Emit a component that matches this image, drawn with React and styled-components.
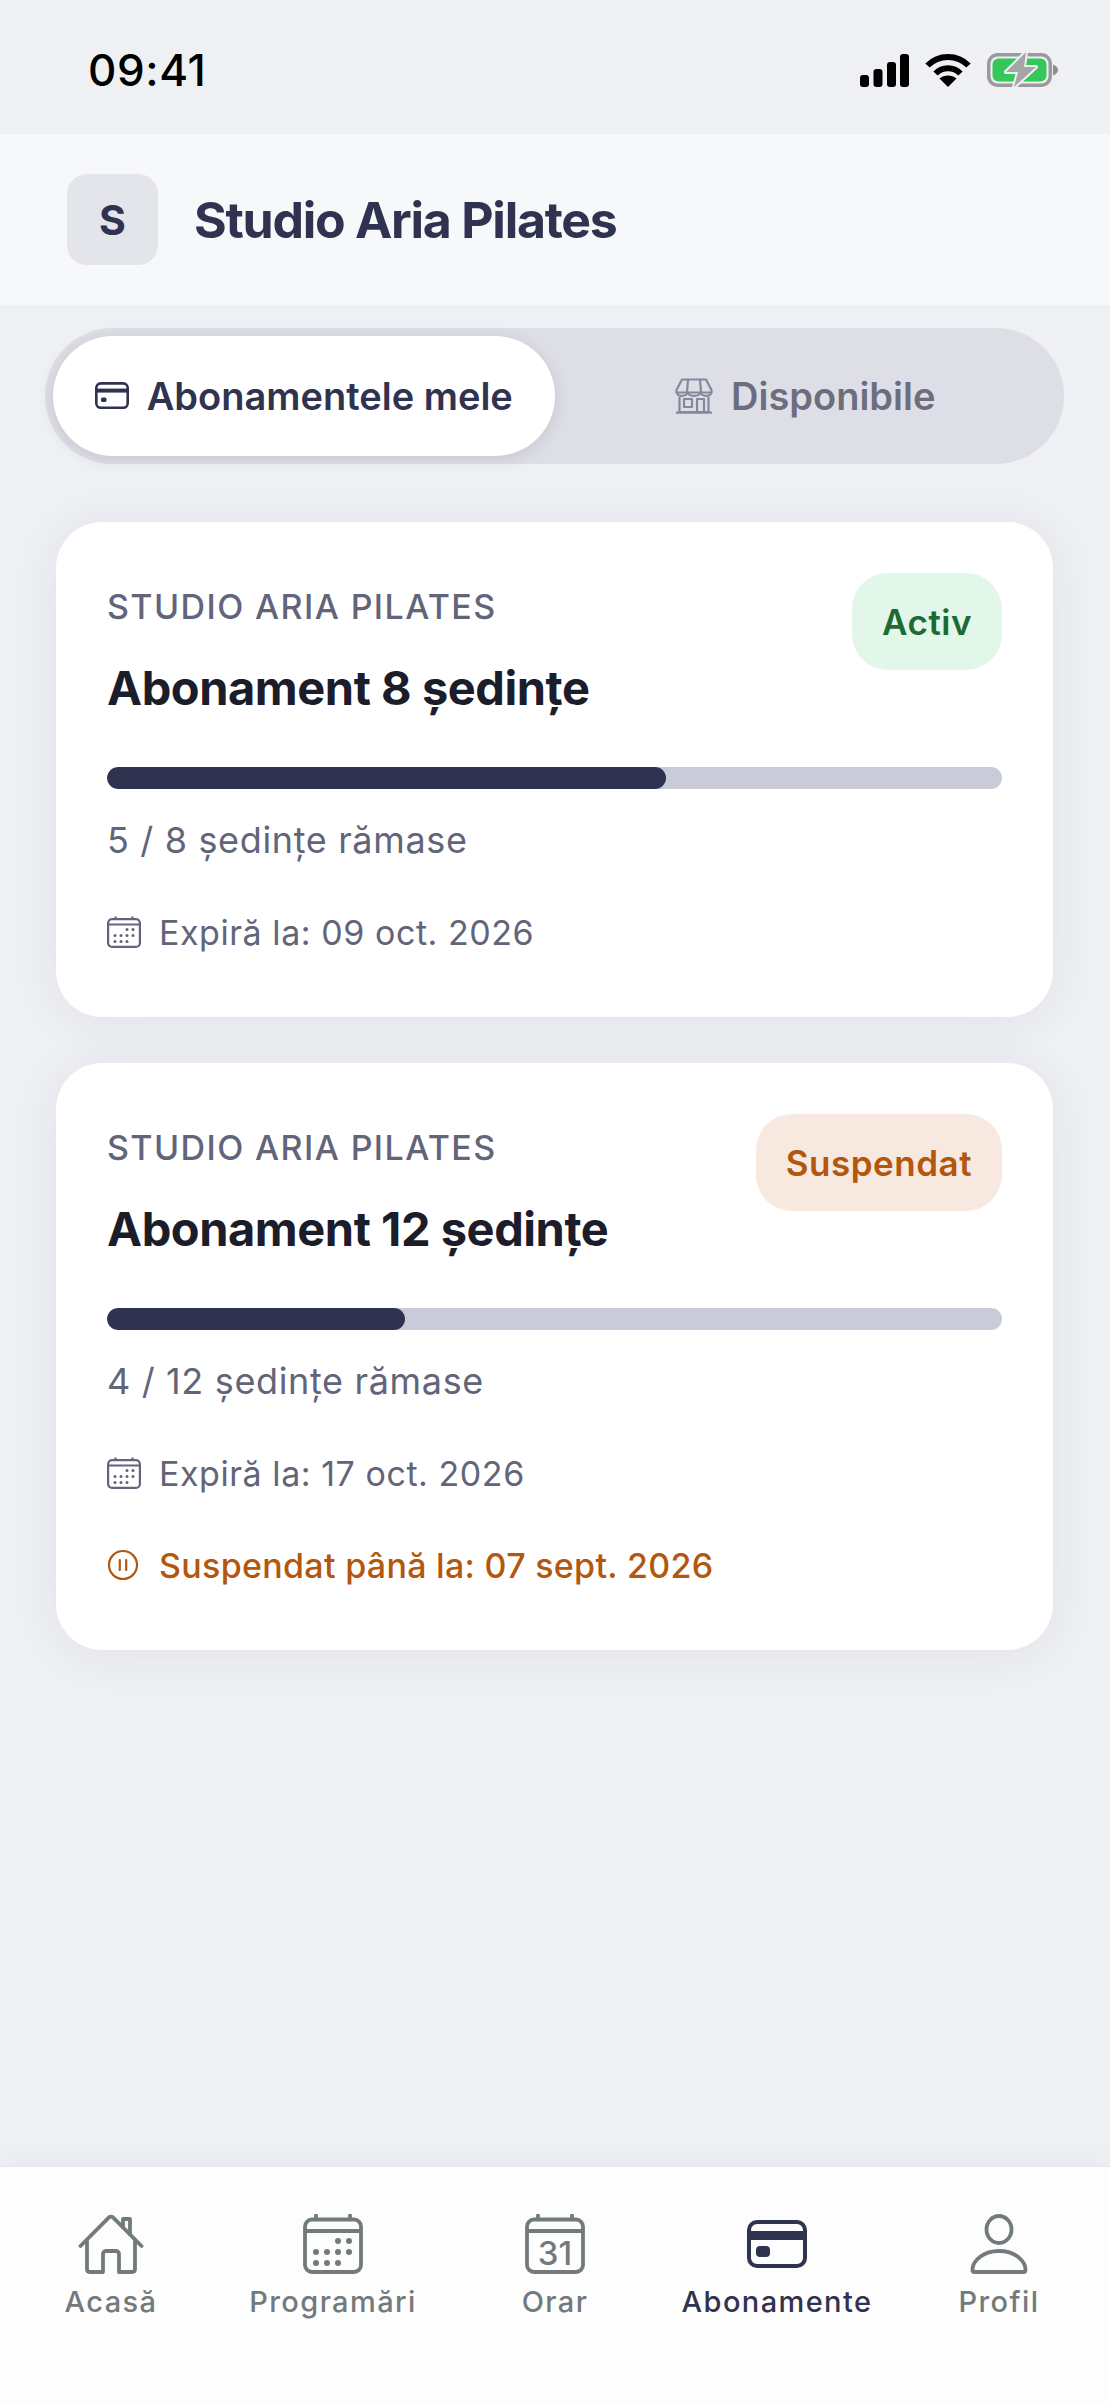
import React from "react";
import styled, { createGlobalStyle } from "styled-components";

const GlobalStyle = createGlobalStyle`
  html, body { margin: 0; padding: 0; background: #eff0f4; }
  * { box-sizing: border-box; }
  body { font-family: Inter, "Noto Sans", sans-serif; -webkit-font-smoothing: antialiased; }
`;

const Page = styled.div`
  width: 1110px;
  height: 2405px;
  display: flex;
  flex-direction: column;
  background: #eff0f4;
  overflow: hidden;
`;

const StatusBar = styled.div`
  height: 134px;
  flex: none;
  display: flex;
  align-items: center;
  justify-content: space-between;
  padding: 6px 52px 0 88px;
`;

const Clock = styled.div`
  font-size: 44px;
  font-weight: 500;
  line-height: 1;
  letter-spacing: 0.6px;
  color: #000;
`;

const StatusIcons = styled.div`
  display: flex;
  align-items: center;
  gap: 16px;
  svg { display: block; }
`;

const Header = styled.header`
  height: 171px;
  flex: none;
  display: flex;
  align-items: center;
  gap: 36px;
  padding: 0 67px;
  background: #f7f8fa;
`;

const Avatar = styled.div`
  width: 91px;
  height: 91px;
  border-radius: 20px;
  background: #e4e5ea;
  color: #2f3350;
  font-size: 41px;
  font-weight: 700;
  display: flex;
  align-items: center;
  justify-content: center;
`;

const StudioName = styled.h1`
  margin: 0;
  font-size: 50px;
  font-weight: 700;
  letter-spacing: -1.25px;
  line-height: 60px;
  color: #2f3350;
`;

const Segmented = styled.div`
  flex: none;
  margin: 23px 46px 0 45px;
  height: 136px;
  padding: 8px;
  border-radius: 68px;
  background: #dedfe6;
  display: grid;
  grid-template-columns: 1fr 1fr;
`;

const Segment = styled.div`
  display: flex;
  align-items: center;
  justify-content: center;
  gap: 18px;
  border-radius: 60px;
  font-size: 38px;
  font-weight: 600;
  color: ${(p) => (p.$active ? "#2f3350" : "#6c6e80")};
  background: ${(p) => (p.$active ? "#ffffff" : "transparent")};
  box-shadow: ${(p) => (p.$active ? "0 3px 16px rgba(40, 42, 70, 0.14)" : "none")};
`;

const CardList = styled.main`
  flex: 1;
  display: flex;
  flex-direction: column;
  gap: 46px;
  padding: 58px 57px 0 56px;
`;

const Card = styled.section`
  background: #ffffff;
  border-radius: 46px;
  padding: 51px 51px 63px 51px;
  box-shadow: 0 4px 50px rgba(40, 44, 70, 0.07);
`;

const CardHead = styled.div`
  display: flex;
  justify-content: space-between;
  align-items: flex-start;
`;

const CardTitles = styled.div`
  padding-top: 14px;
`;

const StudioLabel = styled.div`
  font-size: 34px;
  font-weight: 500;
  line-height: 40px;
  letter-spacing: 1.4px;
  color: #62657a;
`;

const PlanName = styled.h2`
  margin: 33px 0 0;
  font-size: 47px;
  font-weight: 700;
  line-height: 56px;
  letter-spacing: -0.45px;
  color: #1c1d2b;
`;

const StatusBadge = styled.div`
  height: 97px;
  padding: 0 30px;
  border-radius: 36px;
  display: flex;
  align-items: center;
  font-size: 35px;
  font-weight: 600;
  letter-spacing: 0.5px;
  color: ${(p) => (p.$tone === "warn" ? "#b3560e" : "#1c6b35")};
  background: ${(p) => (p.$tone === "warn" ? "#f7e9e0" : "#e3f6ea")};
`;

const Track = styled.div`
  margin-top: 51px;
  height: 22px;
  border-radius: 11px;
  background: #c9ccd8;
  overflow: hidden;
`;

const Fill = styled.div`
  height: 100%;
  border-radius: 11px;
  background: #2f3350;
`;

const Remaining = styled.div`
  margin-top: 29px;
  font-size: 36px;
  line-height: 44px;
  letter-spacing: 0.65px;
  color: #62657a;
`;

const InfoRow = styled.div`
  margin-top: 48px;
  height: 44px;
  display: flex;
  align-items: center;
  gap: ${(p) => (p.$tone === "warn" ? "20px" : "18px")};
  font-size: 34px;
  letter-spacing: ${(p) => (p.$tone === "warn" ? "0.3px" : "0.55px")};
  color: ${(p) => (p.$tone === "warn" ? "#b3560e" : "#62657a")};
  font-weight: ${(p) => (p.$tone === "warn" ? 500 : 400)};
  svg { flex: none; }
`;

const TabBar = styled.nav`
  flex: none;
  height: 239px;
  padding-top: 47px;
  display: grid;
  grid-template-columns: repeat(5, 1fr);
  align-items: start;
  background: #fdfdfe;
  border-top: 1px solid #e6e7eb;
  box-shadow: 0 -4px 30px rgba(40, 44, 70, 0.04);
`;

const Tab = styled.div`
  display: flex;
  flex-direction: column;
  align-items: center;
  color: ${(p) => (p.$active ? "#2f3350" : "#727a7c")};
`;

const TabIcon = styled.div`
  height: 60px;
  display: flex;
  align-items: center;
  justify-content: center;
  svg { display: block; }
`;

const TabLabel = styled.div`
  margin-top: 10px;
  font-size: 29px;
  line-height: 36px;
  font-weight: 500;
  letter-spacing: 1.4px;
  white-space: nowrap;
`;

const SignalIcon = () => (
  <svg width="49" height="33" viewBox="0 0 49 33" fill="#000">
    <rect x="0" y="21" width="9" height="12" rx="3" />
    <rect x="13.5" y="15" width="9" height="18" rx="3" />
    <rect x="27" y="8" width="9" height="25" rx="3" />
    <rect x="40" y="0" width="9" height="33" rx="3" />
  </svg>
);

const WifiIcon = () => (
  <svg width="46" height="34" viewBox="0 0 46 34" fill="none" stroke="#000" strokeWidth="6">
    <path d="M2.5 12.5C13.5 1 32.5 1 43.5 12.5" />
    <path d="M10.5 20.5C17.5 13.5 28.5 13.5 35.5 20.5" />
    <path d="M23 34L14.5 25.5C19 21.5 27 21.5 31.5 25.5Z" fill="#000" stroke="none" />
  </svg>
);

const BatteryIcon = () => (
  <svg width="71" height="36" viewBox="0 -1 71 36" overflow="visible">
    <rect x="1.75" y="1.75" width="61.5" height="30.5" rx="9" fill="none" stroke="#9a9a9c" strokeWidth="3.5" />
    <rect x="5.5" y="5.5" width="54" height="23" rx="6" fill="#34c759" />
    <path d="M66 11.5C69 12.5 71 14.5 71 17s-2 4.5-5 5.5Z" fill="#8e8e90" />
    <path d="M39 -1L19 19H31L27 34L49 14H37Z" fill="#a5a5a7" stroke="#eff0f4" strokeWidth="4" strokeLinejoin="round" paintOrder="stroke" />
  </svg>
);

const CardGlyph = ({ size = 34 }) => (
  <svg width={size} height={size * 0.8} viewBox="0 0 34 27" fill="none" stroke="currentColor" strokeWidth="2.6">
    <rect x="1.3" y="1.3" width="31.4" height="24.4" rx="4.5" />
    <path d="M1.5 8.5H32.5" strokeWidth="4" />
    <rect x="6" y="15.5" width="5.5" height="4.5" rx="1.6" fill="currentColor" stroke="none" />
  </svg>
);

const StoreGlyph = () => (
  <svg width="38" height="36" viewBox="0 0 38 36" fill="none" stroke="#85889a" strokeWidth="2.2" strokeLinejoin="round">
    <path d="M7 1.5H31L36.5 12V14.5H1.5V12Z" />
    <path d="M1.5 14.5C3 19 11 19 12.5 14.5C14 19 24 19 25.5 14.5C27 19 35 19 36.5 14.5" />
    <path d="M13 1.5L12 14M25 1.5L26 14" />
    <path d="M4.5 18.5V34H33.5V18.5" />
    <rect x="9" y="21" width="8" height="8" />
    <path d="M22 34V21H29V34" />
    <path d="M1 34.6H37" />
  </svg>
);

const SmallCalendar = () => (
  <svg width="34" height="32" viewBox="0 0 34 32" fill="none" stroke="#62657a" strokeWidth="2.2">
    <rect x="1.1" y="3.1" width="31.8" height="27.8" rx="4" />
    <path d="M1.500 8.500H32.500M8.500 0.500V3.500M25.500 0.500V3.500" />
    <g fill="#62657a" stroke="none">
      <circle cx="20" cy="13.500" r="1.500" /><circle cx="26" cy="13.500" r="1.500" />
      <circle cx="8" cy="19.500" r="1.500" /><circle cx="14" cy="19.500" r="1.500" /><circle cx="20" cy="19.500" r="1.500" /><circle cx="26" cy="19.500" r="1.500" />
      <circle cx="8" cy="25.500" r="1.500" /><circle cx="14" cy="25.500" r="1.500" /><circle cx="20" cy="25.500" r="1.500" />
    </g>
  </svg>
);

const PauseGlyph = () => (
  <svg width="32" height="32" viewBox="0 0 32 32" fill="none" stroke="#b3560e" strokeWidth="2.2" strokeLinecap="round">
    <circle cx="16" cy="16" r="14" />
    <path d="M12.8 11V21M19.2 11V21" />
  </svg>
);

const HomeIcon = () => (
  <svg width="66" height="60" viewBox="0 0 66 60" fill="none" stroke="currentColor" strokeWidth="3.8" strokeLinecap="round" strokeLinejoin="round">
    <path d="M2.5 32L31 3.4C32 2.4 34 2.4 35 3.4L63.5 32" />
    <path d="M45 13V5H52V20" />
    <path d="M9 27V55C9 57 10 58 12 58H25V40C25 38.500 26 37 28 37H38C40 37 41 38.500 41 40V58H54C56 58 57 57 57 55V27" />
  </svg>
);

const CalendarFrame = ({ children }) => (
  <svg width="60" height="60" viewBox="0 0 60 60" fill="none" stroke="currentColor" strokeWidth="3.8" strokeLinecap="round">
    <rect x="2" y="5.500" width="56" height="52.500" rx="7" />
    <path d="M2.500 17H57.500" />
    <path d="M13 1.500V5M47 1.500V5" />
    {children}
  </svg>
);

const ScheduleIcon = () => (
  <CalendarFrame>
    <g fill="currentColor" stroke="none">
      <circle cx="35" cy="27" r="3" /><circle cx="46" cy="27" r="3" />
      <circle cx="13" cy="38" r="3" /><circle cx="24" cy="38" r="3" /><circle cx="35" cy="38" r="3" /><circle cx="46" cy="38" r="3" />
      <circle cx="13" cy="49" r="3" /><circle cx="24" cy="49" r="3" /><circle cx="35" cy="49" r="3" />
    </g>
  </CalendarFrame>
);

const MonthIcon = () => (
  <CalendarFrame>
    <text x="30" y="51" textAnchor="middle" fontFamily="Inter, sans-serif" fontSize="33" fontWeight="500" fill="currentColor" stroke="none">31</text>
  </CalendarFrame>
);

const WalletIcon = () => (
  <svg width="60" height="48" viewBox="0 0 60 48" fill="none">
    <rect x="2" y="2" width="56" height="44" rx="8" stroke="currentColor" strokeWidth="4" />
    <rect x="2" y="11" width="56" height="9" fill="currentColor" />
    <rect x="9" y="26" width="14" height="11" rx="4" fill="currentColor" />
  </svg>
);

const PersonIcon = () => (
  <svg width="58" height="60" viewBox="0 0 58 60" fill="none" stroke="currentColor" strokeWidth="3.800" strokeLinejoin="round">
    <ellipse cx="29" cy="15.500" rx="12.500" ry="13.500" />
    <path d="M2.500 56C2.500 46 14 37 29 37C44 37 55.500 46 55.500 56C55.500 57.500 55 58 53.500 58H4.500C3 58 2.500 57.500 2.500 56Z" />
  </svg>
);

const subscriptions = [
  { id: 1, name: "Abonament 8 ședințe", status: "Activ", left: "5 / 8 ședințe rămase", pct: 62.5, expires: "Expiră la: 09 oct. 2026" },
  { id: 2, name: "Abonament 12 ședințe", status: "Suspendat", tone: "warn", left: "4 / 12 ședințe rămase", pct: 33.3, expires: "Expiră la: 17 oct. 2026", paused: "Suspendat până la: 07 sept. 2026" },
];

const tabs = [
  { label: "Acasă", Icon: HomeIcon },
  { label: "Programări", Icon: ScheduleIcon },
  { label: "Orar", Icon: MonthIcon },
  { label: "Abonamente", Icon: WalletIcon, active: true },
  { label: "Profil", Icon: PersonIcon },
];

export default function App() {
  return (
    <Page>
      <GlobalStyle />
      <StatusBar>
        <Clock>09:41</Clock>
        <StatusIcons>
          <SignalIcon />
          <WifiIcon />
          <BatteryIcon />
        </StatusIcons>
      </StatusBar>
      <Header>
        <Avatar>S</Avatar>
        <StudioName>Studio Aria Pilates</StudioName>
      </Header>
      <Segmented>
        <Segment $active>
          <CardGlyph />
          Abonamentele mele
        </Segment>
        <Segment>
          <StoreGlyph />
          Disponibile
        </Segment>
      </Segmented>
      <CardList>
        {subscriptions.map((s) => (
          <Card key={s.id}>
            <CardHead>
              <CardTitles>
                <StudioLabel>STUDIO ARIA PILATES</StudioLabel>
                <PlanName>{s.name}</PlanName>
              </CardTitles>
              <StatusBadge $tone={s.tone}>{s.status}</StatusBadge>
            </CardHead>
            <Track>
              <Fill style={{ width: `${s.pct}%` }} />
            </Track>
            <Remaining>{s.left}</Remaining>
            <InfoRow>
              <SmallCalendar />
              {s.expires}
            </InfoRow>
            {s.paused && (
              <InfoRow $tone="warn">
                <PauseGlyph />
                {s.paused}
              </InfoRow>
            )}
          </Card>
        ))}
      </CardList>
      <TabBar>
        {tabs.map(({ label, Icon, active }) => (
          <Tab key={label} $active={active}>
            <TabIcon>
              <Icon />
            </TabIcon>
            <TabLabel>{label}</TabLabel>
          </Tab>
        ))}
      </TabBar>
    </Page>
  );
}
